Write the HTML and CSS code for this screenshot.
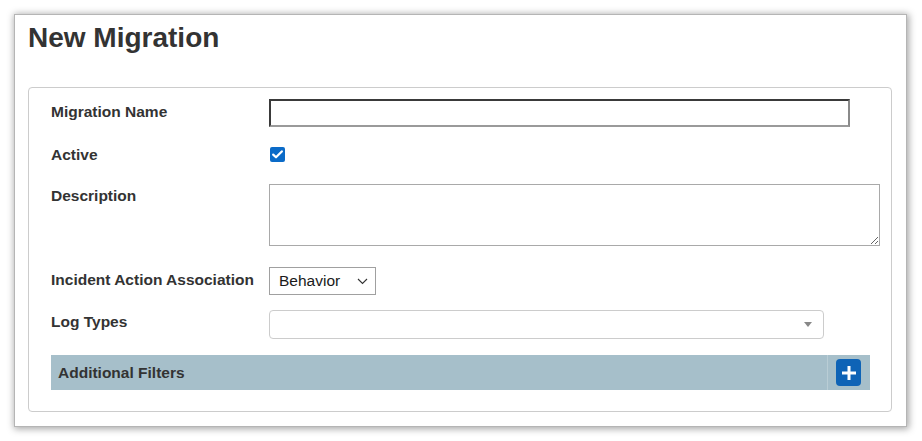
FILE: index.html
```html
<!DOCTYPE html>
<html lang="en">
<head>
<meta charset="utf-8">
<title>New Migration</title>
<link rel="stylesheet" href="styles.css">
</head>
<body>
<div class="card">
  <h1 class="title">New Migration</h1>
  <div class="panel">
    <div class="row row-name">
      <label class="label label-name">Migration Name</label>
      <input class="text-input" type="text">
    </div>
    <div class="row row-active">
      <label class="label">Active</label>
      <span class="checkbox">
        <svg width="11" height="9" viewBox="0 0 11 9"><path d="M1.2 4.6 L4 7.3 L9.8 1.4" fill="none" stroke="#fff" stroke-width="2.2" stroke-linecap="round" stroke-linejoin="round"/></svg>
      </span>
    </div>
    <div class="row row-desc">
      <label class="label label-desc">Description</label>
      <textarea class="textarea"></textarea>
    </div>
    <div class="row row-assoc">
      <label class="label label-assoc">Incident Action Association</label>
      <div class="select">
        <span class="select-text">Behavior</span>
        <svg class="chevron" width="11" height="7" viewBox="0 0 11 7"><path d="M1 1 L5.5 5.5 L10 1" fill="none" stroke="#333" stroke-width="1.1"/></svg>
      </div>
    </div>
    <div class="row row-log">
      <label class="label label-log">Log Types</label>
      <div class="select2">
        <svg class="caret" width="8" height="5" viewBox="0 0 8 5"><path d="M0 0 L8 0 L4 5 Z" fill="#888"/></svg>
      </div>
    </div>
    <div class="filters">
      <span class="filters-title">Additional Filters</span>
      <div class="filters-action">
        <span class="plus-btn">
          <svg width="16" height="16" viewBox="0 0 16 16"><path d="M8 1 V15 M1 8 H15" stroke="#fff" stroke-width="3"/></svg>
        </span>
      </div>
    </div>
  </div>
</div>
</body>
</html>
```
FILE: styles.css
```css
html, body {
  margin: 0;
  padding: 0;
  background: #ffffff;
}
body {
  padding: 14px 15px 14px 14px;
  font-family: "Liberation Sans", Arial, sans-serif;
  color: #333333;
}
.card {
  background: #ffffff;
  border: 1px solid #b5b5b5;
  box-shadow: 1px 1px 7px 1px rgba(0, 0, 0, 0.35);
  padding: 7px 14px 14px 13px;
  height: 413px;
  box-sizing: border-box;
}
.title {
  margin: 0 0 33px 0;
  font-size: 28px;
  line-height: 32px;
  font-weight: bold;
  color: #333333;
}
.panel {
  border: 1px solid #cccccc;
  border-radius: 4px;
  padding: 11px 21px 21px 22px;
}
.row {
  display: flex;
  align-items: center;
}
.label {
  width: 218px;
  flex: none;
  font-size: 15.5px;
  line-height: 17px;
  font-weight: bold;
  color: #333333;
}
.label-name,
.label-desc,
.label-assoc,
.label-log {
  align-self: flex-start;
}
.label-name { padding-top: 4px; }
.label-desc { padding-top: 3px; }
.label-assoc { padding-top: 4px; }
.label-log { padding-top: 3px; }

.row-name { margin-bottom: 18px; }
.row-active { margin-bottom: 21px; height: 18px; }
.row-desc { margin-bottom: 21px; }
.row-assoc { margin-bottom: 15px; }
.row-log { margin-bottom: 16px; }

.text-input {
  box-sizing: border-box;
  flex: none;
  width: 581px;
  height: 28px;
  margin: 0;
  padding: 2px 4px;
  border-style: solid;
  border-width: 2px;
  border-color: #3a3a3a #8a8a8a #9a9a9a #3a3a3a;
  background: #fff;
  font-family: inherit;
  font-size: 15px;
}
.checkbox {
  box-sizing: border-box;
  width: 15px;
  height: 15px;
  margin-left: 1px;
  border-radius: 2px;
  background: #0b6bc8;
  display: flex;
  align-items: center;
  justify-content: center;
}
.textarea {
  box-sizing: border-box;
  flex: none;
  width: 611px;
  height: 62px;
  margin: 0;
  padding: 2px;
  border: 1px solid #a9a9a9;
  font-family: inherit;
  font-size: 14px;
  display: block;
}
.select {
  box-sizing: border-box;
  flex: none;
  width: 107px;
  height: 28px;
  border: 1px solid #a0a0a0;
  background: #ffffff;
  display: flex;
  align-items: center;
  justify-content: space-between;
  padding: 0 7px 0 9px;
}
.select-text {
  font-size: 15.5px;
  color: #1a1a1a;
}
.select2 {
  box-sizing: border-box;
  flex: none;
  width: 555px;
  height: 29px;
  border: 1px solid #cccccc;
  border-radius: 4px;
  background: #ffffff;
  display: flex;
  align-items: center;
  justify-content: flex-end;
  padding-right: 11px;
}
.filters {
  height: 35px;
  background: #a6bfca;
  display: flex;
  align-items: center;
}
.filters-title {
  flex: 1;
  padding-left: 7px;
  font-size: 15.5px;
  font-weight: bold;
  color: #333333;
}
.filters-action {
  height: 100%;
  border-left: 1px solid #b9cdd5;
  padding: 0 9px 0 8px;
  display: flex;
  align-items: center;
}
.plus-btn {
  width: 25px;
  height: 27px;
  border-radius: 4px;
  background: #0e63b6;
  display: flex;
  align-items: center;
  justify-content: center;
}
```
